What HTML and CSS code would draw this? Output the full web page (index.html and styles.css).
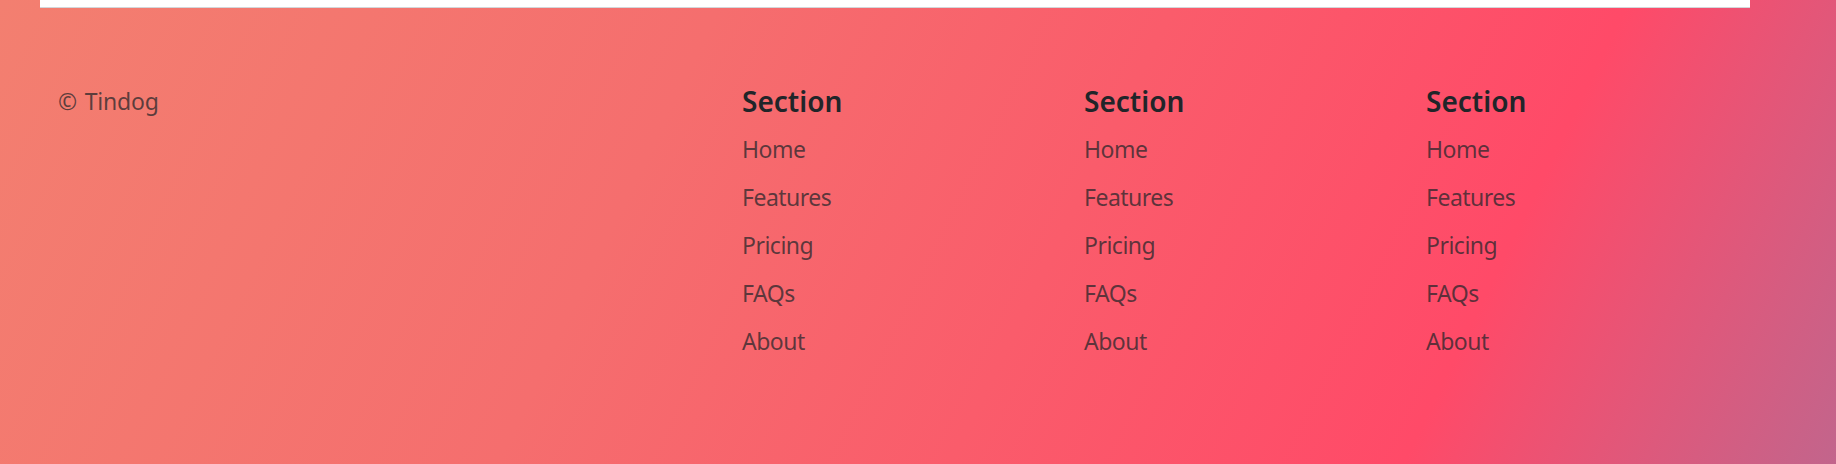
FILE: index.html
```html
<!DOCTYPE html>
<html lang="en">
<head>
<meta charset="utf-8">
<title>Tindog</title>
<link rel="stylesheet" href="styles.css">
</head>
<body>
<div class="container">
  <div class="top-strip"></div>
  <footer class="footer">
    <div class="col">
      <p class="copy">© Tindog</p>
    </div>
    <div class="col"></div>
    <div class="col">
      <h5 class="col-title">Section</h5>
      <ul class="nav">
        <li class="nav-item"><a class="nav-link" href="#">Home</a></li>
        <li class="nav-item"><a class="nav-link" href="#">Features</a></li>
        <li class="nav-item"><a class="nav-link" href="#">Pricing</a></li>
        <li class="nav-item"><a class="nav-link" href="#">FAQs</a></li>
        <li class="nav-item"><a class="nav-link" href="#">About</a></li>
      </ul>
    </div>
    <div class="col">
      <h5 class="col-title">Section</h5>
      <ul class="nav">
        <li class="nav-item"><a class="nav-link" href="#">Home</a></li>
        <li class="nav-item"><a class="nav-link" href="#">Features</a></li>
        <li class="nav-item"><a class="nav-link" href="#">Pricing</a></li>
        <li class="nav-item"><a class="nav-link" href="#">FAQs</a></li>
        <li class="nav-item"><a class="nav-link" href="#">About</a></li>
      </ul>
    </div>
    <div class="col">
      <h5 class="col-title">Section</h5>
      <ul class="nav">
        <li class="nav-item"><a class="nav-link" href="#">Home</a></li>
        <li class="nav-item"><a class="nav-link" href="#">Features</a></li>
        <li class="nav-item"><a class="nav-link" href="#">Pricing</a></li>
        <li class="nav-item"><a class="nav-link" href="#">FAQs</a></li>
        <li class="nav-item"><a class="nav-link" href="#">About</a></li>
      </ul>
    </div>
  </footer>
</div>
</body>
</html>
```

FILE: styles.css
```css
html, body {
  margin: 0;
  padding: 0;
}

body {
  height: 464px;
  overflow: hidden;
  font-family: "Noto Sans", "Open Sans", sans-serif;
  font-size: 23px;
  letter-spacing: -0.5px;
  line-height: 36px;
  color: #212529;
  background: linear-gradient(116deg, #f37f70 0%, #f56e6e 35%, #ff4a68 79%, #c2658c 100%);
}

.container {
  width: 1710px;
  margin-left: 40px;
}

.top-strip {
  height: 7px;
  background: #ffffff;
  border-bottom: 1px solid #d3d6da;
}

.footer {
  display: grid;
  grid-template-columns: repeat(5, 1fr);
  padding: 75px 0 72px;
}

.col {
  padding: 0 18px;
}

.copy {
  margin: 0;
  letter-spacing: -0.2px;
  word-spacing: 2px;
  color: rgba(33, 37, 41, 0.72);
}

.col-title {
  margin: 0 0 12px;
  font-size: 28px;
  font-weight: 600;
  letter-spacing: 0;
  line-height: 36px;
  color: #212529;
}

.nav {
  list-style: none;
  margin: 0;
  padding: 0;
  display: flex;
  flex-direction: column;
}

.nav-item {
  margin-bottom: 12px;
}

.nav-link {
  display: block;
  padding: 0;
  color: rgba(33, 37, 41, 0.72);
  text-decoration: none;
}
```
